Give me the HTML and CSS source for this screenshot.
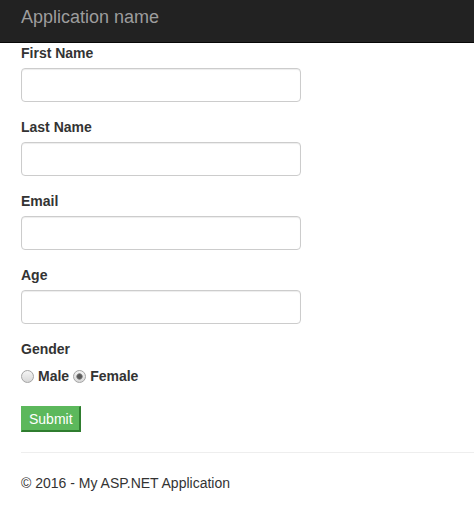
FILE: index.html
```html
<!DOCTYPE html>
<html lang="en">
<head>
    <meta charset="UTF-8">
    <meta name="viewport" content="width=device-width, initial-scale=1.0">
    <title>Application name</title>
    <link rel="stylesheet" href="styles.css">
</head>
<body>
    <div class="navbar">
        <a class="navbar-brand" href="#">Application name</a>
    </div>

    <div class="body-content">
        <form class="person-form">
            <div class="form-group">
                <label for="firstName">First Name</label>
                <input type="text" id="firstName" class="form-control">
            </div>
            <div class="form-group">
                <label for="lastName">Last Name</label>
                <input type="text" id="lastName" class="form-control">
            </div>
            <div class="form-group">
                <label for="email">Email</label>
                <input type="text" id="email" class="form-control">
            </div>
            <div class="form-group">
                <label for="age">Age</label>
                <input type="text" id="age" class="form-control">
            </div>
            <div class="form-group">
                <label>Gender</label>
                <div class="radio-row">
                    <label class="radio-label"><input type="radio" name="gender" value="Male"> Male</label>
                    <label class="radio-label"><input type="radio" name="gender" value="Female" checked> Female</label>
                </div>
            </div>
            <button type="submit" class="btn-submit">Submit</button>
        </form>

        <hr>
        <footer>
            <p>&copy; 2016 - My ASP.NET Application</p>
        </footer>
    </div>
</body>
</html>
```

FILE: styles.css
```css
body {
    margin: 0;
    font-family: "Liberation Sans", Arial, sans-serif;
    font-size: 14px;
    line-height: 20px;
    color: #333;
    background-color: #fff;
}

.navbar {
    height: 43px;
    background-color: #222;
    border-bottom: 1px solid #080808;
    box-sizing: border-box;
    padding: 7px 21px 0;
}

.navbar-brand {
    font-size: 18px;
    line-height: 20px;
    color: #9d9d9d;
    text-decoration: none;
}

.body-content {
    padding: 0 0 0 21px;
}

.form-group {
    margin-bottom: 15px;
}

.form-group > label {
    display: block;
    font-weight: bold;
    margin-bottom: 5px;
}

.form-control {
    display: block;
    width: 280px;
    height: 34px;
    box-sizing: border-box;
    padding: 6px 12px;
    font-family: inherit;
    font-size: 14px;
    color: #555;
    background-color: #fff;
    border: 1px solid #ccc;
    border-radius: 4px;
    box-shadow: inset 0 1px 1px rgba(0, 0, 0, 0.075);
}

.radio-row {
    display: flex;
    gap: 4px;
    padding-top: 2px;
}

.radio-label {
    display: flex;
    align-items: center;
    gap: 4px;
    font-weight: bold;
}

.radio-label input {
    appearance: none;
    -webkit-appearance: none;
    margin: 0;
    width: 13px;
    height: 13px;
    border: 1px solid #a4a4a4;
    border-radius: 50%;
    background: linear-gradient(#f4f4f4, #d8d8d8);
    box-sizing: border-box;
}

.radio-label input:checked {
    background: radial-gradient(circle, #5a5a5a 0, #5a5a5a 2px, #9a9a9a 3px, transparent 3.5px), linear-gradient(#f4f4f4, #d8d8d8);
}

.btn-submit {
    display: block;
    margin-top: 20px;
    padding: 2px 6px 1px 7px;
    font-family: inherit;
    font-size: 14px;
    line-height: 20px;
    color: #fff;
    background-color: #5cb85c;
    border-style: solid;
    border-width: 1px 2px 2px 1px;
    border-color: #5cb85c #2f7d2f #2f7d2f #5cb85c;
    cursor: pointer;
}

hr {
    margin: 20px 0 0 0;
    border: 0;
    border-top: 1px solid #eee;
}

footer p {
    margin: 20px 0 0;
}
```
